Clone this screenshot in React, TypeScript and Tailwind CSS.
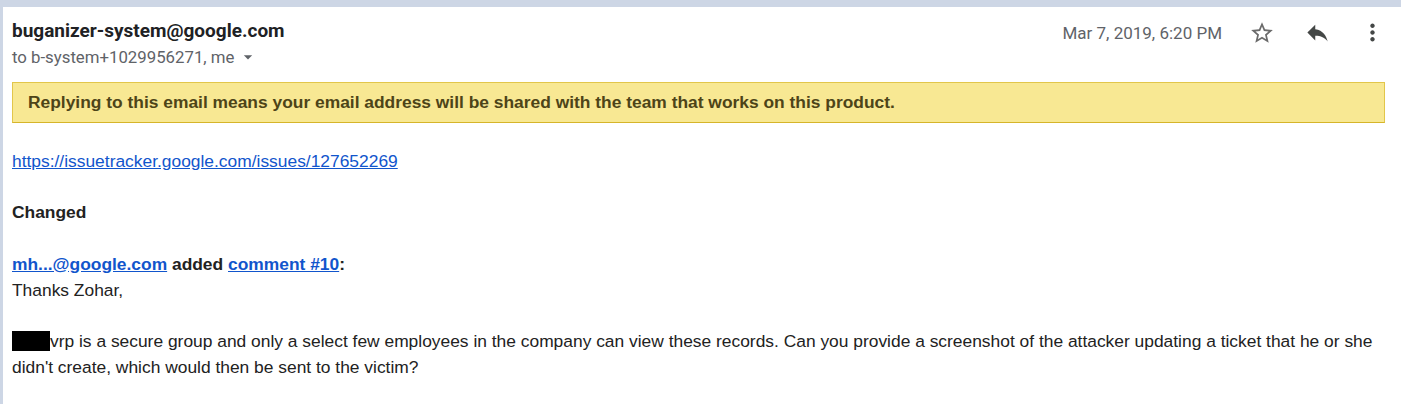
import React from "react";

export default function App() {
  return (
    <div className="w-[1401px] h-[404px] flex flex-col bg-[#cdd6e5] overflow-hidden">
      <div className="h-[7px] shrink-0" />
      <div className="flex flex-1">
        <div className="w-[3px] shrink-0" />
        <div className="flex-1 bg-white pl-[9px] pr-[16px]">
          <div className="flex justify-between items-start pt-[12px]">
            <div className="flex flex-col">
              <div className="text-[19px] leading-[24px] font-bold text-[#202124] font-['Roboto',sans-serif]">
                buganizer-system@google.com
              </div>
              <div className="mt-[4px] flex items-center text-[16.8px] leading-[20px] text-[#5f6368] font-['Roboto',sans-serif]">
                <span>to b-system+1029956271, me</span>
                <svg width="20" height="20" viewBox="0 0 24 24" className="ml-[4px]">
                  <path d="M7 10l5 5 5-5z" fill="#5f6368" />
                </svg>
              </div>
            </div>
            <div className="flex items-center">
              <span className="text-[17px] leading-[24px] text-[#5f6368] font-['Roboto',sans-serif] mr-[27px]">
                Mar 7, 2019, 6:20 PM
              </span>
              <svg width="26" height="26" viewBox="0 0 24 24" className="mr-[29px]">
                <path
                  d="M22 9.24l-7.19-.62L12 2 9.19 8.63 2 9.24l5.46 4.73L5.82 21 12 17.27 18.18 21l-1.63-7.03L22 9.24zM12 15.4l-3.76 2.27 1-4.28-3.32-2.88 4.38-.38L12 6.1l1.71 4.04 4.38.38-3.32 2.88 1 4.28L12 15.4z"
                  fill="#6b6b6b"
                />
              </svg>
              <svg width="27" height="27" viewBox="0 0 24 24" className="mr-[28px]">
                <path d="M10 9V5l-7 7 7 7v-4.1c5 0 8.5 1.6 11 5.1-1-5-4-10-11-11z" fill="#444746" />
              </svg>
              <svg width="27" height="27" viewBox="0 0 24 24" className="mr-[-1px]">
                <path
                  d="M12 8c1.1 0 2-.9 2-2s-.9-2-2-2-2 .9-2 2 .9 2 2 2zm0 2c-1.1 0-2 .9-2 2s.9 2 2 2 2-.9 2-2-.9-2-2-2zm0 6c-1.1 0-2 .9-2 2s.9 2 2 2 2-.9 2-2-.9-2-2-2z"
                  fill="#444746"
                />
              </svg>
            </div>
          </div>

          <div className="mt-[15px] h-[41px] flex items-center bg-[#f8e893] border border-[#e2c64a] border-b-[#d6b52a] pl-[15px] text-[17.4px] font-bold text-[#4d4418] font-['Liberation_Sans',Arial,sans-serif]">
            Replying to this email means your email address will be shared with the team that works on this product.
          </div>

          <div className="mt-[26px] text-[17.4px] leading-[25.7px] text-[#222222] font-['Liberation_Sans',Arial,sans-serif]">
            <a className="text-[#1155cc] underline">https://issuetracker.google.com/issues/127652269</a>
            <br />
            <br />
            <b>Changed</b>
            <br />
            <br />
            <b>
              <a className="text-[#1155cc] underline">mh...@google.com</a> added{" "}
              <a className="text-[#1155cc] underline">comment #10</a>:
            </b>
            <br />
            Thanks Zohar,
            <br />
            <br />
            <span className="inline-block w-[38px] h-[20px] bg-black align-[-4px]" />
            vrp is a secure group and only a select few employees in the company can view these records. Can you provide a screenshot of the attacker updating a ticket that he or she
            <br />
            didn't create, which would then be sent to the victim?
          </div>
        </div>
      </div>
    </div>
  );
}
